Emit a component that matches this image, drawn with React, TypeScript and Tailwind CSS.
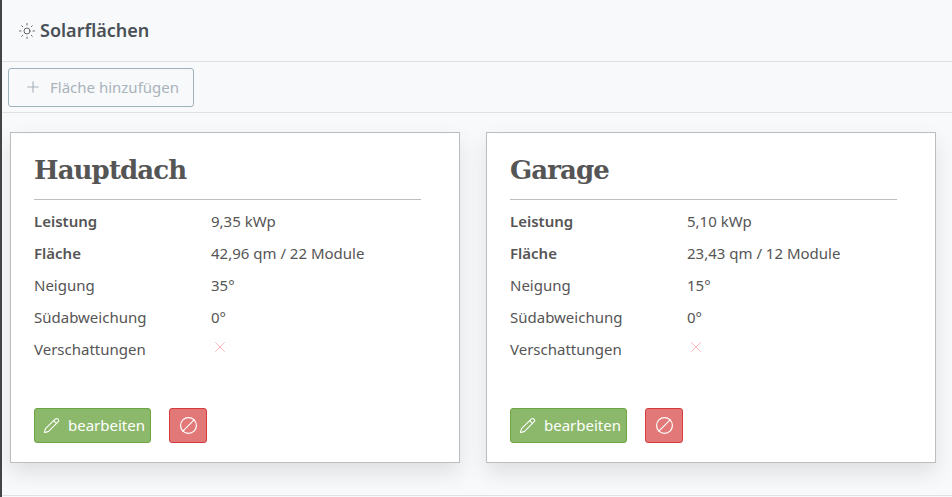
import { Ban, Pencil, Plus, Sun, X } from "lucide-react";

type Row = { label: string; value?: string; bold?: boolean };

type Surface = { title: string; rows: Row[] };

const surfaces: Surface[] = [
  {
    title: "Hauptdach",
    rows: [
      { label: "Leistung", value: "9,35 kWp", bold: true },
      { label: "Fläche", value: "42,96 qm / 22 Module", bold: true },
      { label: "Neigung", value: "35°" },
      { label: "Südabweichung", value: "0°" },
      { label: "Verschattungen" },
    ],
  },
  {
    title: "Garage",
    rows: [
      { label: "Leistung", value: "5,10 kWp", bold: true },
      { label: "Fläche", value: "23,43 qm / 12 Module", bold: true },
      { label: "Neigung", value: "15°" },
      { label: "Südabweichung", value: "0°" },
      { label: "Verschattungen" },
    ],
  },
];

const SurfaceCard = ({ title, rows }: Surface) => {
  return (
    <article className="w-[450px] h-[331px] shrink-0 bg-white border border-[#bdbdbd] shadow-[0_10px_20px_rgba(0,0,0,0.1)] pt-[19px] pl-[23px] pr-[38px]">
      <h2 className="font-['DejaVu_Serif',serif] font-bold text-[26px] leading-[36px] text-[#555] tracking-[-0.9px] pb-[11px] border-b border-[#bdbdbd]">{title}</h2>
      <div className="mt-[5px]">
        {rows.map((row) => (
          <div key={row.label} className="flex h-8 items-center text-[15px] text-[#555]">
            <span className={row.bold ? "w-[177px] font-semibold" : "w-[177px]"}>{row.label}</span>
            {row.value ? <span>{row.value}</span> : <X size={18} strokeWidth={1} className="text-[#f5a3a3] -mt-1" />}
          </div>
        ))}
      </div>
      <div className="flex gap-[18px] mt-[43px]">
        <button className="flex items-center gap-2 h-[35px] w-[117px] pl-2 rounded-[3px] bg-[#8cb86b] border border-[#6ea544] text-white text-[15px]">
          <Pencil size={17} strokeWidth={1.5} />
          bearbeiten
        </button>
        <button className="flex items-center justify-center h-[35px] w-[38px] rounded-[3px] bg-[#e27878] border border-[#d63c3c] text-white">
          <Ban size={19} strokeWidth={1.5} className="-scale-x-100" />
        </button>
      </div>
    </article>
  );
};

const App = () => {
  return (
    <div className="w-[952px] h-[497px] overflow-hidden bg-[#f8f9fa] font-['Noto_Sans',sans-serif] border-l-2 border-[#444]">
      <header className="flex items-center h-[62px] pl-[16px] border-b border-[#dee2e6] border-l-2 border-l-[#5f9432] -ml-[2px]">
        <Sun size={18} strokeWidth={1} className="text-[#343a40]" />
        <h1 className="ml-[4px] text-[18px] font-semibold text-[#495057]">Solarflächen</h1>
      </header>
      <div className="flex items-center h-[51px] pl-[6px] border-b border-[#dee2e6]">
        <button className="flex items-center gap-2 h-[39px] w-[186px] pl-[15px] rounded-[3px] border border-[#9db2bd] text-[15px] text-[#a8b3ba]">
          <Plus size={18} strokeWidth={1.5} />
          Fläche hinzufügen
        </button>
      </div>
      <main className="flex gap-[26px] pl-[8px] pt-[19px] h-[383px] border-b border-[#dee2e6]">
        {surfaces.map((surface) => (
          <SurfaceCard key={surface.title} {...surface} />
        ))}
      </main>
    </div>
  );
};

export default App;
